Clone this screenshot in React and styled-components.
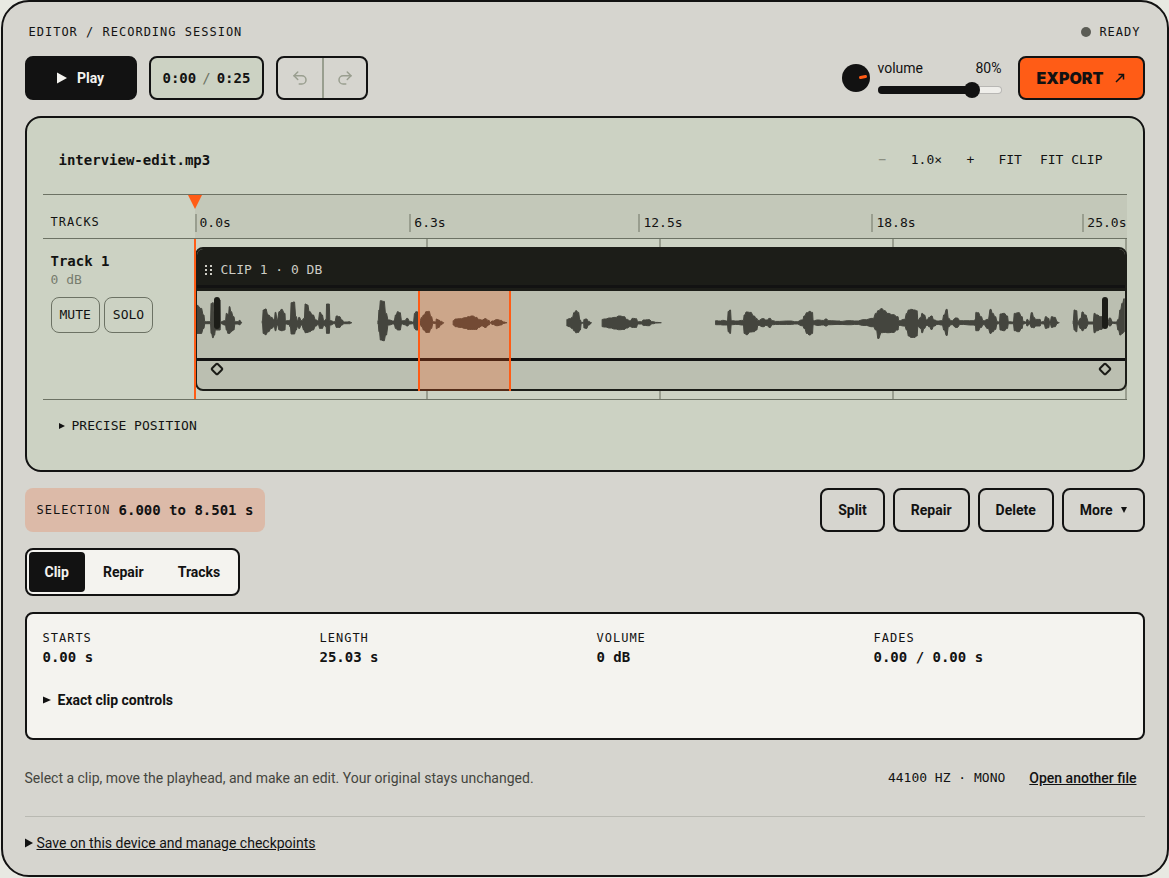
import { useState } from "react"
import styled, { createGlobalStyle } from "styled-components"
import { Undo2, Redo2 } from "lucide-react"

const ink = "#121212"
const orange = "#ff5c16"
const sage = "#ccd2c3"
const tick = "#999e8f"
const rule = "#6c7264"
const sans = '"Roboto", "Liberation Sans", sans-serif'
const mono = '"DejaVu Sans Mono", "Liberation Mono", monospace'

const duration = 25.03
const selection = { start: 6, end: 8.501 }
const marks = ["0.0s", "6.3s", "12.5s", "18.8s", "25.0s"]
const clipInfo = [
  { label: "STARTS", value: "0.00 s" },
  { label: "LENGTH", value: "25.03 s" },
  { label: "VOLUME", value: "0 dB" },
  { label: "FADES", value: "0.00 / 0.00 s" },
]

// envelope points: x, top, bottom (thirds of a pixel, 128 is the centre line)
const waves = [
  { from: -16, points: "48,76,160 60,85,160 68,105,145 72,125,131 88,125,131 91,70,160 96,68,173 100,95,165 104,60,150 117,60,150 119,125,131 133,122,135 137,100,150 142,105,160 146,80,160 150,95,155 158,110,150 163,125,132 170,125,132 176,121,134 182,127,129" },
  { from: -16, points: "244,122,130 248,90,160 254,87,164 262,105,155 272,112,145 280,120,140 284,97,152 289,118,135 296,95,150 302,88,152 312,100,150 314,122,132 324,122,133 328,120,140 332,68,162 340,66,162 346,110,150 350,122,140 355,112,145 362,122,135 370,115,150 374,72,158 380,75,157 386,95,155 396,105,150 406,120,138 412,122,133 418,97,145 424,105,145 430,122,136 436,118,140 438,72,160 445,72,160 448,122,135 462,125,131 468,108,142 476,110,142 484,120,135 490,126,131 498,126,131 505,125,131 514,128,128" },
  { from: -16, points: "592,122,132 596,90,155 600,62,180 610,64,182 616,100,165 624,120,135 640,123,132 646,105,145 652,95,150 658,98,150 664,122,132 672,122,134 680,115,138 688,124,132 698,126,131 703,100,145 707,95,150 713,96,150 718,122,132 724,112,140 730,105,150 738,95,157 745,94,157 752,110,145 758,125,130 766,126,130 768,117,146 774,120,142 782,124,134 790,128,129" },
  { from: -16, points: "818,122,135 826,117,140 840,116,142 855,113,145 865,110,148 875,108,148 888,112,148 895,118,142 905,120,138 915,116,142 925,121,135 930,127,129 936,123,133 950,119,137 962,121,135 970,126,130 980,128,128" },
  { from: 314, points: "170,118,138 178,116,140 186,112,145 192,98,152 198,92,158 204,97,157 210,120,150 214,127,130 220,127,129 222,118,144 228,117,145 236,124,135 244,128,129" },
  { from: 314, points: "276,118,140 284,117,141 300,114,144 315,112,147 328,108,149 342,110,148 350,118,144 360,122,140 368,115,142 378,116,142 384,125,132 392,125,132 402,120,136 416,119,137 428,125,131 440,127,129 454,128,128" },
  { from: 314, points: "617,122,134 630,123,134 640,121,135 652,123,135 656,94,155 661,90,160 665,122,134 680,123,133 700,121,135 704,105,160 710,96,164 722,97,156 732,108,155 740,115,150 745,121,136 760,116,140 770,120,136 780,115,142 788,122,134 800,124,133 840,123,133 860,125,132 878,120,137 884,108,145 892,98,160 900,94,165 908,97,160 911,122,134 925,120,136 940,121,135 950,117,138 956,122,134 991,123,133" },
  { from: 634, points: "30,124,133 60,122,134 80,123,133 105,119,136 130,115,140 140,100,150 146,92,175 156,86,158 165,92,157 175,100,158 190,104,157 205,110,150 208,122,136 225,118,138 232,100,150 238,90,168 245,88,172 255,90,172 262,92,168 266,120,140 274,112,145 278,100,158 284,105,145 292,120,136 300,112,140 306,108,148 314,120,138 325,123,133 338,122,135 344,105,150 352,88,166 358,115,140 365,122,134 382,114,142 394,122,133 430,122,135 438,120,136 440,97,152 446,98,152 455,110,142 462,122,134 476,118,145 484,88,160 490,100,155 498,110,148 504,124,132 510,126,131 513,102,150 524,100,152 534,108,145 538,125,131 552,126,131 556,100,152 568,98,155 578,110,145 582,124,132 590,126,130 594,118,138 600,124,132 608,98,142 614,112,143 620,118,138 632,118,138 636,126,131 644,124,132 650,110,145 658,115,143 662,126,130 668,110,142 676,112,140 686,126,130 690,128,128" },
  { from: 634, points: "732,122,132 736,90,150 742,92,155 746,124,132 755,115,145 760,96,152 768,105,145 780,126,132 792,126,132 796,100,158 804,105,152 815,110,148 830,120,138 836,124,132 842,114,138 852,126,130 862,126,131 868,118,150 874,90,165 880,70,160 886,56,155" },
]

// each point is held for a quarter of the way to its neighbours, so peaks stay blunt
const wavePath = ({ from, points }) => {
  const list = points
    .split(" ")
    .map((p) => p.split(",").map(Number))
    .flatMap(([x, top, bottom], i, all) => {
      const before = i > 0 ? (x - all[i - 1][0]) / 4 : 0
      const after = i < all.length - 1 ? (all[i + 1][0] - x) / 4 : 0
      return [[x - before, top, bottom], [x + after, top, bottom]]
    })
  const x = (v) => (from + v / 3).toFixed(1)
  const y = (v) => (31.7 + (v - 128) / 3).toFixed(1)
  const top = list.map((p) => `${x(p[0])} ${y(p[1])}`)
  const bottom = list.map((p) => `${x(p[0])} ${y(p[2])}`).reverse()
  return `M${top.concat(bottom).join("L")}Z`
}

const App = () => {
  const [volume, setVolume] = useState(80)
  const [tab, setTab] = useState("Clip")

  return (
    <Shell>
      <Global />
      <TopBar>
        <Label>EDITOR / RECORDING SESSION</Label>
        <Status><i /><Label>READY</Label></Status>
      </TopBar>

      <Row>
        <Group $gap={12}>
          <PlayButton type="button">
            <svg width="10" height="12" viewBox="0 0 10 12"><path d="M0 0.5L10 6L0 11.5Z" fill="currentColor" /></svg>
            Play
          </PlayButton>
          <Time><b>0:00</b><span>/</span><b>0:25</b></Time>
          <History>
            <button type="button" aria-label="Undo" disabled><Undo2 size={18} /></button>
            <button type="button" aria-label="Redo" disabled><Redo2 size={18} /></button>
          </History>
        </Group>
        <Group $gap={16}>
          <Volume>
            <svg width="28" height="28" viewBox="0 0 28 28">
              <circle cx="14" cy="14" r="14" fill={ink} />
              <path d="M18.5 13.5L23.5 12.5" stroke={orange} strokeWidth="3" strokeLinecap="round" />
            </svg>
            <VolumeField>
              <div>
                <label htmlFor="volume">volume</label>
                <output htmlFor="volume">{volume}%</output>
              </div>
              <Slider
                id="volume"
                type="range"
                value={volume}
                onChange={(e) => setVolume(Number(e.target.value))}
                style={{ "--level": `${volume}%` }}
              />
            </VolumeField>
          </Volume>
          <ExportButton type="button">
            EXPORT
            <svg width="10" height="10" viewBox="0 0 10 10" fill="none" stroke="currentColor" strokeWidth="1.5"><path d="M1 9L8 2M3.5 1.5H8.5V6.5" /></svg>
          </ExportButton>
        </Group>
      </Row>

      <Panel>
        <PanelHead>
          <FileName>interview-edit.mp3</FileName>
          <Zoom>
            <button type="button" aria-label="Zoom out" disabled>−</button>
            <output>1.0×</output>
            <button type="button" aria-label="Zoom in">+</button>
            <button type="button">FIT</button>
            <button type="button">FIT CLIP</button>
          </Zoom>
        </PanelHead>

        <Timeline>
          <RulerTitle><Label>TRACKS</Label></RulerTitle>
          <Ruler>
            {marks.map((m) => <Mark key={m}>{m}</Mark>)}
            <PlayheadTip width="14" height="14" viewBox="0 0 14 14"><path d="M0 0H14L7 14Z" fill={orange} /></PlayheadTip>
          </Ruler>
          <TrackHead>
            <h2>Track 1</h2>
            <p>0 dB</p>
            <Group $gap={4}>
              <ToggleButton type="button">MUTE</ToggleButton>
              <ToggleButton type="button">SOLO</ToggleButton>
            </Group>
          </TrackHead>
          <Lane>
            <Clip>
              <ClipHead>
                <svg width="8" height="12" viewBox="0 0 8 12" fill="currentColor">
                  {[1, 5, 9].map((y) => <path key={y} d={`M0 ${y}h2v2h-2zM5 ${y}h2v2h-2z`} />)}
                </svg>
                CLIP 1 · 0 DB
              </ClipHead>
              <Wave viewBox="0 0 930 67" preserveAspectRatio="none">
                {waves.map((w) => <path key={w.points} d={wavePath(w)} />)}
              </Wave>
              <Envelope>
                <Keyframe /><Keyframe />
              </Envelope>
              <FadeHandle $side="left" />
              <FadeHandle $side="right" />
            </Clip>
            <Selection
              style={{
                left: `${(selection.start / duration) * 100}%`,
                width: `${((selection.end - selection.start) / duration) * 100}%`,
              }}
            />
            <Playhead />
          </Lane>
        </Timeline>

        <Precise>
          <summary>
            <svg width="6" height="6" viewBox="0 0 6 6"><path d="M0 0L6 3L0 6Z" fill="currentColor" /></svg>
            PRECISE POSITION
          </summary>
        </Precise>
      </Panel>

      <Row>
        <SelectionInfo>
          <Label>SELECTION</Label>
          <b>6.000 to 8.501 s</b>
        </SelectionInfo>
        <Group $gap={8}>
          <Button type="button">Split</Button>
          <Button type="button">Repair</Button>
          <Button type="button">Delete</Button>
          <Button type="button">
            More
            <svg width="6" height="6" viewBox="0 0 6 6"><path d="M0 0H6L3 6Z" fill="currentColor" /></svg>
          </Button>
        </Group>
      </Row>

      <Tabs role="tablist">
        {["Clip", "Repair", "Tracks"].map((name) => (
          <Tab key={name} type="button" role="tab" aria-selected={tab === name} $active={tab === name} onClick={() => setTab(name)}>
            {name}
          </Tab>
        ))}
      </Tabs>

      <Details>
        <Facts>
          {clipInfo.map(({ label, value }) => (
            <div key={label}>
              <dt><Label>{label}</Label></dt>
              <dd>{value}</dd>
            </div>
          ))}
        </Facts>
        <Exact>
          <summary>
            <svg width="8" height="8" viewBox="0 0 8 8"><path d="M0 0.5L8 4L0 7.5Z" fill="currentColor" /></svg>
            Exact clip controls
          </summary>
        </Exact>
      </Details>

      <Row>
        <Hint>Select a clip, move the playhead, and make an edit. Your original stays unchanged.</Hint>
        <Group $gap={16}>
          <Format>44100 HZ · MONO</Format>
          <OpenLink href="#open">Open another file</OpenLink>
        </Group>
      </Row>

      <Save>
        <summary>
          <svg width="8" height="10" viewBox="0 0 8 10"><path d="M0 0.5L8 5L0 9.5Z" fill="currentColor" /></svg>
          <span>Save on this device and manage checkpoints</span>
        </summary>
      </Save>
    </Shell>
  )
}

export default App

const Global = createGlobalStyle`
  * {
    box-sizing: border-box;
  }
  body {
    margin: 0;
    background: #e8e9e2;
    color: ${ink};
    font: 14px/20px ${sans};
  }
  button {
    font: inherit;
    color: inherit;
    background: none;
    border: 0;
    padding: 0;
    cursor: pointer;
  }
  h2, p, dl, dd {
    margin: 0;
  }
  svg {
    display: block;
    flex: none;
  }
  summary {
    display: flex;
    align-items: center;
    cursor: pointer;
  }
`

const Shell = styled.main`
  max-width: 1168px;
  margin: 0 auto;
  padding: 22px;
  display: flex;
  flex-direction: column;
  gap: 16px;
  background: #d6d5cf;
  border: 2px solid ${ink};
  border-radius: 28px;
`

const Row = styled.div`
  display: flex;
  align-items: center;
  justify-content: space-between;
  min-height: 44px;
`

const Group = styled.div`
  display: flex;
  align-items: center;
  gap: ${({ $gap }) => $gap}px;
`

const Label = styled.span`
  display: block;
  font: 12px/16px ${mono};
  letter-spacing: 1px;
`

const TopBar = styled.header`
  display: flex;
  justify-content: space-between;
  padding: 0 4px;
`

const Status = styled.div`
  display: flex;
  align-items: center;
  gap: 8px;
  i {
    width: 10px;
    height: 10px;
    border-radius: 50%;
    background: #5b5c55;
  }
`

const Button = styled.button`
  display: flex;
  align-items: center;
  justify-content: center;
  gap: 8px;
  height: 44px;
  padding: 0 16px;
  border: 2px solid ${ink};
  border-radius: 8px;
  font-weight: 700;
`

const PlayButton = styled(Button)`
  width: 112px;
  gap: 10px;
  background: ${ink};
  color: #f4f3ef;
`

const ExportButton = styled(Button)`
  min-width: 127px;
  background: ${orange};
  font-family: "Inter", sans-serif;
  font-weight: 900;
  font-size: 16px;
  gap: 12px;
`

const Time = styled.div`
  display: flex;
  align-items: center;
  gap: 6px;
  height: 44px;
  padding: 0 12px;
  background: ${sage};
  border: 2px solid ${ink};
  border-radius: 8px;
  font-family: ${mono};
  span {
    color: ${rule};
  }
`

const History = styled.div`
  display: flex;
  height: 44px;
  border: 2px solid ${ink};
  border-radius: 8px;
  button {
    display: flex;
    align-items: center;
    justify-content: center;
    width: 44px;
    color: ${tick};
  }
  button + button {
    border-left: 2px solid ${tick};
  }
`

const Volume = styled.div`
  display: flex;
  align-items: center;
  gap: 8px;
`

const VolumeField = styled.div`
  display: flex;
  flex-direction: column;
  gap: 4px;
  width: 124px;
  & > div {
    display: flex;
    justify-content: space-between;
  }
`

const Slider = styled.input`
  appearance: none;
  width: 100%;
  height: 16px;
  margin: 0;
  background: none;
  &::-webkit-slider-runnable-track {
    height: 8px;
    border-radius: 4px;
    background: linear-gradient(to right, ${ink} var(--level), #efeeea var(--level));
    box-shadow: inset 0 0 0 1px rgba(18, 18, 18, 0.25);
  }
  &::-webkit-slider-thumb {
    appearance: none;
    width: 16px;
    height: 16px;
    margin-top: -4px;
    border-radius: 50%;
    background: ${ink};
  }
`

const Panel = styled.section`
  padding: 16px;
  background: ${sage};
  border: 2px solid ${ink};
  border-radius: 16px;
`

const PanelHead = styled.div`
  display: flex;
  align-items: center;
  justify-content: space-between;
  padding: 4px 16px 12px;
`

const FileName = styled.h2`
  font: 700 14px/20px ${mono};
`

const Zoom = styled.div`
  display: flex;
  align-items: center;
  gap: 2px;
  font: 13px/20px ${mono};
  button {
    min-width: 36px;
    height: 44px;
    padding: 0 8px;
  }
  button:disabled {
    color: #85897b;
  }
  output {
    width: 48px;
    text-align: center;
  }
`

const Timeline = styled.div`
  display: grid;
  grid-template-columns: 152px 1fr;
  border-top: 1px solid ${rule};
  border-bottom: 1px solid ${rule};
`

const RulerTitle = styled.div`
  display: flex;
  align-items: flex-end;
  padding: 0 8px 8px;
  border-bottom: 1px solid ${rule};
`

const Ruler = styled.div`
  position: relative;
  display: grid;
  grid-template-columns: 1fr 2fr 2fr 2fr 1fr;
  align-items: end;
  justify-items: center;
  height: 44px;
  padding-bottom: 6px;
  background: #c3c8b9;
  border-bottom: 1px solid ${rule};
`

const Mark = styled.span`
  padding-left: 3px;
  border-left: 2px solid ${tick};
  font: 13px/18px ${mono};
  &:first-child {
    justify-self: start;
  }
  &:nth-child(5) {
    justify-self: end;
  }
`

const PlayheadTip = styled.svg`
  position: absolute;
  top: 0;
  left: -7px;
`

const TrackHead = styled.div`
  padding: 12px 8px;
  h2 {
    font: 700 14px/20px ${mono};
  }
  p {
    margin-bottom: 8px;
    font: 13px/18px ${mono};
    color: #777c6e;
  }
`

const ToggleButton = styled.button`
  height: 36px;
  padding: 0 8px;
  border: 1px solid ${rule};
  border-radius: 8px;
  font: 13px/18px ${mono};
`

const Lane = styled.div`
  position: relative;
  padding: 8px 0;
  background-image: linear-gradient(to left, ${tick} 2px, transparent 2px);
  background-size: 25% 100%;
`

const Clip = styled.div`
  position: relative;
  height: 144px;
  overflow: hidden;
  background: #bbbfb1;
  border: 2px solid #1c1d18;
  border-radius: 8px;
`

const ClipHead = styled.div`
  display: flex;
  align-items: center;
  gap: 8px;
  height: 42px;
  padding: 0 8px;
  background: linear-gradient(#1c1d18 36px, ${ink} 36px, ${ink} 39px, #1c1d18 39px);
  color: #cdccc4;
  font: 13px/18px ${mono};
`

const Wave = styled.svg`
  width: 100%;
  height: 67px;
  fill: #44453e;
  stroke: #44453e;
  stroke-width: 1;
  stroke-linejoin: round;
`

const Envelope = styled.div`
  display: flex;
  justify-content: space-between;
  height: 31px;
  padding: 3px 15px;
  border-top: 3px solid ${ink};
`

const Keyframe = styled.i`
  width: 10px;
  height: 10px;
  border: 2px solid #1c1d18;
  border-radius: 2px;
  transform: rotate(45deg);
`

const FadeHandle = styled.i`
  position: absolute;
  top: 48px;
  ${({ $side }) => $side}: 17px;
  width: 6px;
  height: 32px;
  border-radius: 3px;
  background: #1c1d18;
`

const Selection = styled.div`
  position: absolute;
  top: 52px;
  height: 100px;
  background: rgba(255, 92, 22, 0.25);
  border: solid ${orange};
  border-width: 0 2px;
`

const Playhead = styled.i`
  position: absolute;
  top: 0;
  bottom: 0;
  left: -1px;
  width: 2px;
  background: ${orange};
`

const Precise = styled.details`
  padding: 4px 16px 6px;
  font: 13px/20px ${mono};
  summary {
    height: 44px;
    gap: 7px;
  }
`

const SelectionInfo = styled.div`
  display: flex;
  align-items: center;
  gap: 8px;
  height: 44px;
  padding: 0 12px;
  border-radius: 8px;
  background: #dcbaa8;
  b {
    font-family: ${mono};
  }
`

const Tabs = styled.div`
  display: flex;
  align-self: flex-start;
  gap: 2px;
  padding: 2px;
  background: #f4f3ef;
  border: 2px solid ${ink};
  border-radius: 8px;
`

const Tab = styled.button`
  height: 40px;
  padding: 0 16px;
  border-radius: 4px;
  font-weight: 700;
  background: ${({ $active }) => ($active ? ink : "transparent")};
  color: ${({ $active }) => ($active ? "#f4f3ef" : ink)};
`

const Details = styled.section`
  padding: 16px;
  background: #f4f3ef;
  border: 2px solid ${ink};
  border-radius: 8px;
`

const Facts = styled.dl`
  display: grid;
  grid-template-columns: repeat(4, 1fr);
  gap: 24px;
  margin-bottom: 10px;
  dd {
    font: 700 14px/22px ${mono};
  }
`

const Exact = styled.details`
  font-weight: 700;
  summary {
    height: 44px;
    gap: 7px;
  }
`

const Hint = styled.p`
  color: #44453e;
`

const Format = styled.span`
  font: 13px/20px ${mono};
`

const OpenLink = styled.a`
  padding: 0 8px;
  color: inherit;
  font-weight: 500;
`

const Save = styled.details`
  padding-top: 16px;
  border-top: 1px solid #b9b9b2;
  summary {
    gap: 4px;
  }
  span {
    text-decoration: underline;
  }
`
